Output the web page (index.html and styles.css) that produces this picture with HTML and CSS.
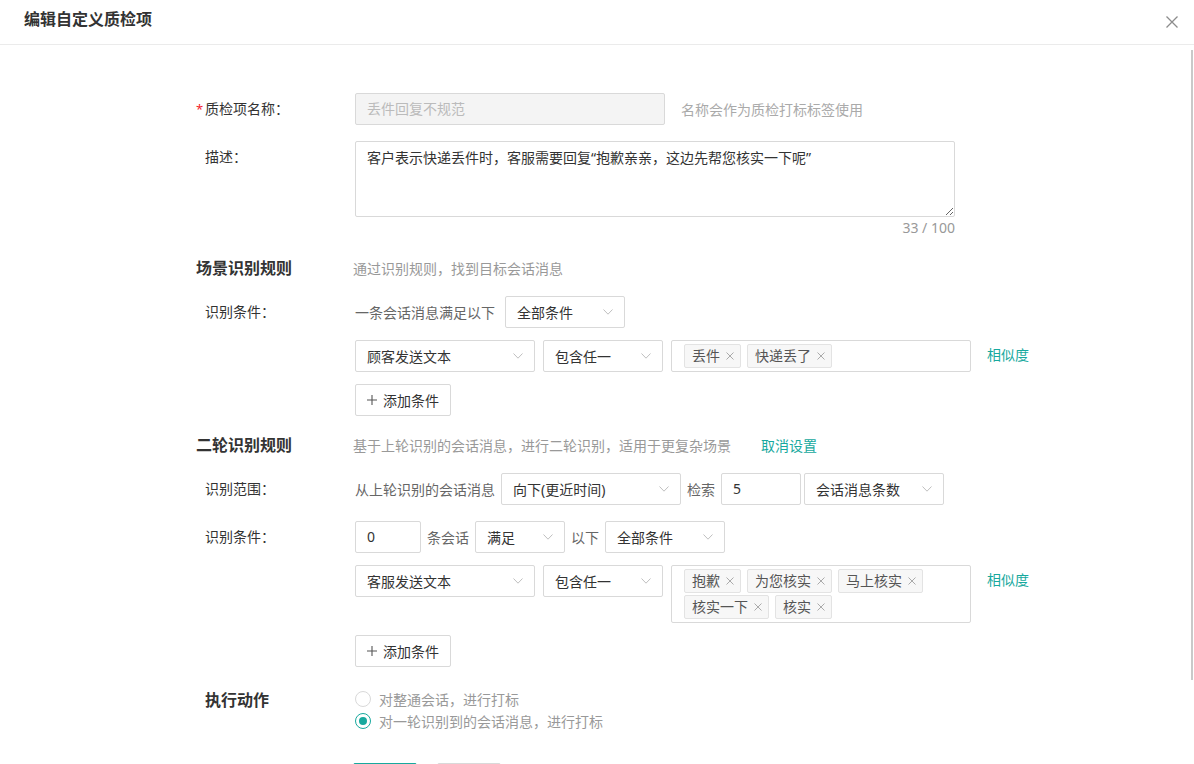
FILE: index.html
```html
<!DOCTYPE html>
<html lang="zh-CN">
<head>
<meta charset="utf-8">
<title>编辑自定义质检项</title>
<link rel="stylesheet" href="styles.css">
</head>
<body>
<div class="modal">
  <div class="modal-header">
    <h1 class="modal-title">编辑自定义质检项</h1>
    <span class="close">
      <svg width="12" height="12" viewBox="0 0 12 12"><path d="M0.5 0.5L11.5 11.5M11.5 0.5L0.5 11.5" stroke="#8c8c8c" stroke-width="1.3" fill="none"/></svg>
    </span>
  </div>
  <div class="modal-body">
    <div class="item item-name">
      <div class="item-label required">质检项名称：</div>
      <div class="ctrl">
        <div class="input input-disabled">丢件回复不规范</div>
        <span class="hint">名称会作为质检打标标签使用</span>
      </div>
    </div>

    <div class="item item-desc">
      <div class="item-label">描述：</div>
      <div class="ctrl-col">
        <textarea class="textarea" readonly>客户表示快递丢件时，客服需要回复“抱歉亲亲，这边先帮您核实一下呢”</textarea>
        <div class="counter">33 / 100</div>
      </div>
    </div>

    <div class="section">
      <div class="section-title">场景识别规则</div>
      <div class="section-hint">通过识别规则，找到目标会话消息</div>
    </div>

    <div class="item item-gap12">
      <div class="item-label">识别条件：</div>
      <div class="ctrl">
        <span class="txt">一条会话消息满足以下</span>
        <div class="select w120 ml10"><span>全部条件</span><svg class="arrow" width="10" height="6" viewBox="0 0 10 6"><path d="M0.5 0.5L5 5.2L9.5 0.5" stroke="#bfbfbf" fill="none"/></svg></div>
      </div>
    </div>

    <div class="item item-gap12 indent">
      <div class="cond">
        <div class="select w180"><span>顾客发送文本</span><svg class="arrow" width="10" height="6" viewBox="0 0 10 6"><path d="M0.5 0.5L5 5.2L9.5 0.5" stroke="#bfbfbf" fill="none"/></svg></div>
        <div class="select w120"><span>包含任一</span><svg class="arrow" width="10" height="6" viewBox="0 0 10 6"><path d="M0.5 0.5L5 5.2L9.5 0.5" stroke="#bfbfbf" fill="none"/></svg></div>
        <div class="tags">
          <span class="tag">丢件<svg class="tag-x" width="8" height="8" viewBox="0 0 8 8"><path d="M0.5 0.5L7.5 7.5M7.5 0.5L0.5 7.5" stroke="#aaa" fill="none"/></svg></span>
          <span class="tag">快递丢了<svg class="tag-x" width="8" height="8" viewBox="0 0 8 8"><path d="M0.5 0.5L7.5 7.5M7.5 0.5L0.5 7.5" stroke="#aaa" fill="none"/></svg></span>
        </div>
        <a class="link sim">相似度</a>
      </div>
    </div>

    <div class="item item-gap17 indent">
      <div class="btn-add"><svg width="10" height="10" viewBox="0 0 10 10"><path d="M5 0V10M0 5H10" stroke="#555" stroke-width="1.1" fill="none"/></svg><span>添加条件</span></div>
    </div>

    <div class="section">
      <div class="section-title">二轮识别规则</div>
      <div class="section-hint">基于上轮识别的会话消息，进行二轮识别，适用于更复杂场景</div>
      <a class="link cancel">取消设置</a>
    </div>

    <div class="item">
      <div class="item-label">识别范围：</div>
      <div class="ctrl">
        <span class="txt">从上轮识别的会话消息</span>
        <div class="select w180 ml6"><span>向下(更近时间)</span><svg class="arrow" width="10" height="6" viewBox="0 0 10 6"><path d="M0.5 0.5L5 5.2L9.5 0.5" stroke="#bfbfbf" fill="none"/></svg></div>
        <span class="txt mx6">检索</span>
        <div class="input w80">5</div>
        <div class="select w140 ml3"><span>会话消息条数</span><svg class="arrow" width="10" height="6" viewBox="0 0 10 6"><path d="M0.5 0.5L5 5.2L9.5 0.5" stroke="#bfbfbf" fill="none"/></svg></div>
      </div>
    </div>

    <div class="item item-gap12">
      <div class="item-label">识别条件：</div>
      <div class="ctrl">
        <div class="input w66">0</div>
        <span class="txt mx6">条会话</span>
        <div class="select w90"><span>满足</span><svg class="arrow" width="10" height="6" viewBox="0 0 10 6"><path d="M0.5 0.5L5 5.2L9.5 0.5" stroke="#bfbfbf" fill="none"/></svg></div>
        <span class="txt mx6">以下</span>
        <div class="select w120"><span>全部条件</span><svg class="arrow" width="10" height="6" viewBox="0 0 10 6"><path d="M0.5 0.5L5 5.2L9.5 0.5" stroke="#bfbfbf" fill="none"/></svg></div>
      </div>
    </div>

    <div class="item item-gap12 indent">
      <div class="cond">
        <div class="select w180"><span>客服发送文本</span><svg class="arrow" width="10" height="6" viewBox="0 0 10 6"><path d="M0.5 0.5L5 5.2L9.5 0.5" stroke="#bfbfbf" fill="none"/></svg></div>
        <div class="select w120"><span>包含任一</span><svg class="arrow" width="10" height="6" viewBox="0 0 10 6"><path d="M0.5 0.5L5 5.2L9.5 0.5" stroke="#bfbfbf" fill="none"/></svg></div>
        <div class="tags">
          <span class="tag">抱歉<svg class="tag-x" width="8" height="8" viewBox="0 0 8 8"><path d="M0.5 0.5L7.5 7.5M7.5 0.5L0.5 7.5" stroke="#aaa" fill="none"/></svg></span>
          <span class="tag">为您核实<svg class="tag-x" width="8" height="8" viewBox="0 0 8 8"><path d="M0.5 0.5L7.5 7.5M7.5 0.5L0.5 7.5" stroke="#aaa" fill="none"/></svg></span>
          <span class="tag">马上核实<svg class="tag-x" width="8" height="8" viewBox="0 0 8 8"><path d="M0.5 0.5L7.5 7.5M7.5 0.5L0.5 7.5" stroke="#aaa" fill="none"/></svg></span>
          <span class="tag">核实一下<svg class="tag-x" width="8" height="8" viewBox="0 0 8 8"><path d="M0.5 0.5L7.5 7.5M7.5 0.5L0.5 7.5" stroke="#aaa" fill="none"/></svg></span>
          <span class="tag">核实<svg class="tag-x" width="8" height="8" viewBox="0 0 8 8"><path d="M0.5 0.5L7.5 7.5M7.5 0.5L0.5 7.5" stroke="#aaa" fill="none"/></svg></span>
        </div>
        <a class="link sim">相似度</a>
      </div>
    </div>

    <div class="item item-gap21 indent">
      <div class="btn-add"><svg width="10" height="10" viewBox="0 0 10 10"><path d="M5 0V10M0 5H10" stroke="#555" stroke-width="1.1" fill="none"/></svg><span>添加条件</span></div>
    </div>

    <div class="action">
      <div class="action-title">执行动作</div>
      <div class="radios">
        <label class="radio"><span class="radio-dot"></span><span class="radio-text">对整通会话，进行打标</span></label>
        <label class="radio"><span class="radio-dot checked"></span><span class="radio-text">对一轮识别到的会话消息，进行打标</span></label>
      </div>
    </div>

    <div class="footer">
      <div class="btn btn-primary" aria-label="保存"></div>
      <div class="btn btn-default" aria-label="取消"></div>
    </div>
  </div>
  <div class="scrollbar"></div>
</div>
</body>
</html>
```

FILE: styles.css
```css
* { box-sizing: border-box; }

body {
  margin: 0;
  background: #fff;
  font-family: "Noto Sans", "Noto Sans CJK SC", sans-serif;
  font-size: 14px;
  color: #333;
  overflow: hidden;
}

.modal {
  position: relative;
  width: 1194px;
  height: 764px;
  overflow: hidden;
  background: #fff;
}

.modal-header {
  height: 45px;
  border-bottom: 1px solid #ebebeb;
  display: flex;
  justify-content: space-between;
  align-items: flex-start;
  padding: 0 16px 0 24px;
}

.modal-title {
  margin: 0;
  padding-top: 7px;
  font-size: 16px;
  line-height: 24px;
  font-weight: 700;
  color: #333;
}

.close {
  display: block;
  margin-top: 16px;
  width: 12px;
  height: 12px;
}
.close svg { display: block; }

.modal-body {
  padding: 48px 0 0 196px;
}

.item {
  display: flex;
  align-items: flex-start;
  margin-bottom: 16px;
}
.item-gap12 { margin-bottom: 12px; }
.item-gap17 { margin-bottom: 17px; }
.item-gap21 { margin-bottom: 21px; }
.item-desc { margin-bottom: 17px; }
.indent { padding-left: 159px; }

.item-label {
  position: relative;
  width: 159px;
  flex: none;
  padding-left: 9px;
  line-height: 32px;
  color: #333;
}
.required::before {
  content: "*";
  position: absolute;
  left: 0;
  top: 0;
  color: #f5222d;
  font-size: 13px;
}

.ctrl {
  display: flex;
  align-items: center;
  height: 32px;
}
.ctrl-col {
  display: flex;
  flex-direction: column;
  width: 600px;
}

.input {
  height: 32px;
  border: 1px solid #d9d9d9;
  border-radius: 2px;
  padding: 0 11px;
  line-height: 30px;
  color: #333;
  background: #fff;
  font-family: "Noto Sans", "Noto Sans CJK SC", sans-serif;
}
.input-disabled {
  width: 310px;
  background: #f4f4f4;
  color: #bbb;
}
.w80 { width: 80px; }
.w66 { width: 66px; }

.hint {
  margin-left: 16px;
  color: #aaa;
}

.textarea {
  display: block;
  width: 600px;
  height: 76px;
  border: 1px solid #d9d9d9;
  border-radius: 2px;
  padding: 5px 11px;
  margin: 0;
  font-family: "Noto Sans", "Noto Sans CJK SC", sans-serif;
  font-size: 14px;
  line-height: 22px;
  color: #333;
  resize: vertical;
  outline: none;
}
.counter {
  text-align: right;
  line-height: 22px;
  color: #999;
}

.section {
  display: flex;
  align-items: center;
  height: 24px;
  margin-bottom: 16px;
}
.section-title {
  width: 157px;
  flex: none;
  font-size: 16px;
  font-weight: 700;
  color: #333;
  line-height: 24px;
}
.section-hint {
  color: #999;
}
.link {
  color: #17a99e;
  cursor: pointer;
}
.cancel { margin-left: 30px; }

.txt { color: #666; white-space: nowrap; }
.ml10 { margin-left: 10px; }
.ml6 { margin-left: 6px; }
.ml3 { margin-left: 3px; }
.mx6 { margin: 0 6px; }

.select {
  display: flex;
  align-items: center;
  justify-content: space-between;
  height: 32px;
  border: 1px solid #d9d9d9;
  border-radius: 2px;
  padding: 0 11px;
  color: #333;
  white-space: nowrap;
  flex: none;
}
.arrow { display: block; flex: none; }
.w120 { width: 120px; }
.w180 { width: 180px; }
.w140 { width: 140px; }
.w90 { width: 90px; }

.cond {
  display: flex;
  align-items: flex-start;
  gap: 8px;
}

.tags {
  width: 300px;
  min-height: 32px;
  border: 1px solid #d9d9d9;
  border-radius: 2px;
  padding: 3px 12px;
  display: flex;
  flex-wrap: wrap;
  gap: 2px 6px;
}
.tag {
  display: inline-flex;
  align-items: center;
  height: 24px;
  border: 1px solid #e3e3e3;
  border-radius: 2px;
  background: #f7f7f7;
  padding: 0 6px 0 7px;
  color: #555;
  line-height: 22px;
  white-space: nowrap;
}
.tag-x {
  display: block;
  margin-left: 6px;
}

.sim {
  margin-left: 8px;
  line-height: 30px;
}

.btn-add {
  display: inline-flex;
  align-items: center;
  height: 32px;
  border: 1px solid #d9d9d9;
  border-radius: 2px;
  padding: 0 11px;
  color: #333;
  gap: 6px;
}
.btn-add svg { display: block; }

.action {
  display: flex;
  align-items: flex-start;
  margin-bottom: 31px;
}
.action-title {
  width: 159px;
  flex: none;
  padding-left: 9px;
  font-size: 16px;
  font-weight: 700;
  line-height: 24px;
  color: #333;
}
.radios {
  display: flex;
  flex-direction: column;
}
.radio {
  display: flex;
  align-items: center;
  height: 22px;
}
.radio-dot {
  position: relative;
  width: 16px;
  height: 16px;
  border: 1px solid #d9d9d9;
  border-radius: 50%;
  background: #fff;
  flex: none;
}
.radio-dot.checked { border-color: #17a99e; }
.radio-dot.checked::after {
  content: "";
  position: absolute;
  left: 3px;
  top: 3px;
  width: 8px;
  height: 8px;
  border-radius: 50%;
  background: #17a99e;
}
.radio-text {
  margin-left: 8px;
  color: #999;
}

.footer {
  display: flex;
  gap: 20px;
  margin-left: 157px;
}
.btn {
  width: 64px;
  height: 32px;
  border-radius: 2px;
}
.btn-primary {
  background: #17a99e;
  border: 1px solid #17a99e;
}
.btn-default {
  border: 1px solid #d9d9d9;
}

.scrollbar {
  position: absolute;
  left: 1191px;
  top: 50px;
  width: 2px;
  height: 630px;
  background: #c9c9c9;
}
```
